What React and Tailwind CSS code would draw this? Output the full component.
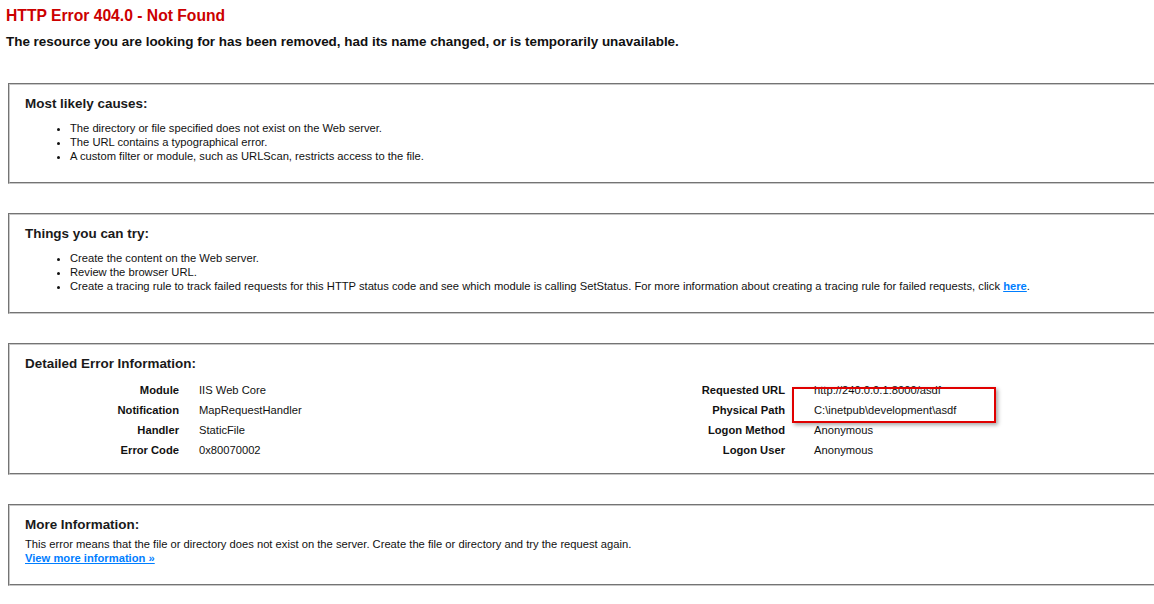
import React from 'react';

const causes = [
  'The directory or file specified does not exist on the Web server.',
  'The URL contains a typographical error.',
  'A custom filter or module, such as URLScan, restricts access to the file.',
];

const leftDetails = [
  ['Module', 'IIS Web Core'],
  ['Notification', 'MapRequestHandler'],
  ['Handler', 'StaticFile'],
  ['Error Code', '0x80070002'],
];

const rightDetails = [
  ['Requested URL', 'http://240.0.0.1:8000/asdf'],
  ['Physical Path', 'C:\\inetpub\\development\\asdf'],
  ['Logon Method', 'Anonymous'],
  ['Logon User', 'Anonymous'],
];

function Box({ title, children, className = '' }) {
  return (
    <fieldset className={`ml-[8px] mr-[-40px] border-2 [border-style:groove] border-[#c8c8c8] px-[15px] pt-[11px] ${className}`}>
      <h4 className="text-[13.44px] leading-[16px] font-bold text-[#1a1a1a]">{title}</h4>
      {children}
    </fieldset>
  );
}

function Bullets({ items }) {
  return (
    <ul className="mt-[9px] pl-[45px] list-disc text-[11.2px] leading-[14px] text-[#111]">
      {items.map((item, i) => (
        <li key={i}>{item}</li>
      ))}
    </ul>
  );
}

function DetailRows({ rows, labelWidth, gap }) {
  return (
    <div className="flex flex-col">
      {rows.map(([label, value]) => (
        <div key={label} className="flex h-[20px] items-center">
          <div className="shrink-0 text-right font-bold" style={{ width: labelWidth }}>{label}</div>
          <div className="whitespace-nowrap" style={{ paddingLeft: gap }}>{value}</div>
        </div>
      ))}
    </div>
  );
}

export default function App() {
  return (
    <div className="relative w-full overflow-hidden bg-white pb-[18px] text-black" style={{ fontFamily: '"Liberation Sans", Arial, sans-serif' }}>
      <h3 className="ml-[6px] pt-[7px] text-[15.68px] leading-[18px] font-bold text-[#cc0000]">HTTP Error 404.0 - Not Found</h3>
      <h4 className="ml-[6px] mt-[9px] text-[13.44px] leading-[16px] font-bold text-[#111]">
        The resource you are looking for has been removed, had its name changed, or is temporarily unavailable.
      </h4>

      <Box title="Most likely causes:" className="mt-[33px] pb-[19px]">
        <Bullets items={causes} />
      </Box>

      <Box title="Things you can try:" className="mt-[29px] pb-[19px]">
        <Bullets
          items={[
            'Create the content on the Web server.',
            'Review the browser URL.',
            <>
              Create a tracing rule to track failed requests for this HTTP status code and see which module is calling SetStatus. For more information about creating a tracing rule for failed requests, click{' '}
              <a href="#" className="font-bold text-[#007eff] underline">here</a>.
            </>,
          ]}
        />
      </Box>

      <Box title="Detailed Error Information:" className="mt-[29px] pb-[13px]">
        <div className="mt-[8px] flex text-[11.2px] text-[#111]">
          <div className="w-[560px] shrink-0">
            <DetailRows rows={leftDetails} labelWidth={154} gap={20} />
          </div>
          <DetailRows rows={rightDetails} labelWidth={200} gap={29} />
        </div>
      </Box>

      <Box title="More Information:" className="mt-[29px] pb-[19px]">
        <div className="mt-[4px] text-[11.2px] leading-[14px] text-[#111]">
          <p>This error means that the file or directory does not exist on the server. Create the file or directory and try the request again.</p>
          <a href="#" className="font-bold text-[#007eff] underline">View more information &raquo;</a>
        </div>
      </Box>

      <div className="pointer-events-none absolute left-[792px] top-[387px] h-[36px] w-[204px] border-2 border-[#e00000] shadow-[2px_2px_4px_rgba(0,0,0,0.35)]" />
    </div>
  );
}
